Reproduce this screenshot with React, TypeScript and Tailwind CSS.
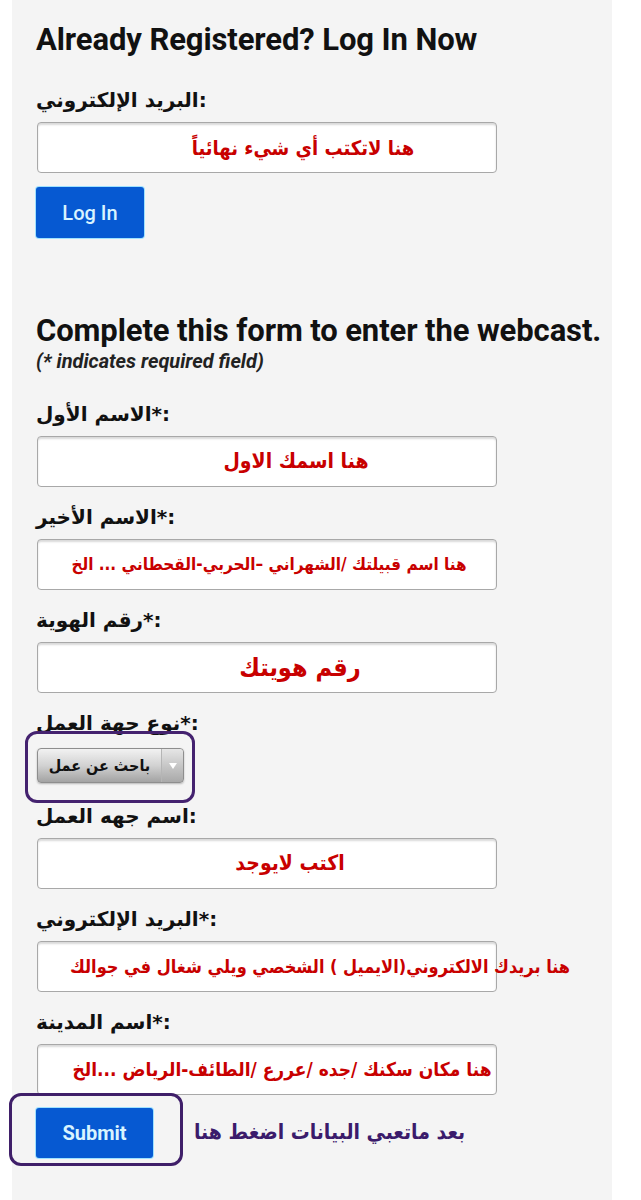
import type { ReactNode } from "react";

const ar = "font-['DejaVu_Sans',sans-serif]";
const arBold = "font-['DejaVu_Sans_Condensed','DejaVu_Sans',sans-serif]";

function Label({ children, top = "mt-[16px]" }: { children: ReactNode; top?: string }) {
  return (
    <p className={`${top} h-[28px] text-[20px] leading-[28px] text-[#111] font-semibold ${ar}`}>
      {children}
    </p>
  );
}

function Field({ hint, pad, size = "text-[21px]" }: { hint: string; pad: string; size?: string }) {
  return (
    <div
      className={`mt-[8px] ml-[1px] w-[460px] h-[51px] flex items-center justify-center ${pad} bg-white border border-[#a8a8a8] rounded-[4px] shadow-[inset_0_2px_2px_rgba(0,0,0,0.15)]`}
    >
      <span dir="rtl" className={`whitespace-nowrap ${size} font-bold text-[#c80000] ${arBold}`}>
        {hint}
      </span>
    </div>
  );
}

export default function App() {
  return (
    <div className="min-h-[1200px] bg-white">
      <div className="ml-[12px] w-[600px] min-h-[1200px] bg-[#f4f4f4] pl-[24px] pt-[24px] font-['Roboto','Liberation_Sans',sans-serif]">
        {/* Log in */}
        <h1 className="h-[32px] text-[31px] leading-[32px] font-bold text-[#111] tracking-[-0.1px] whitespace-nowrap">
          Already Registered? Log In Now
        </h1>
        <Label top="mt-[30px]">البريد الإلكتروني:</Label>
        <Field hint="هنا لاتكتب أي شيء نهائياً" pad="pl-[72px]" size="text-[20px]" />
        <button className="mt-[14px] w-[108px] h-[51px] rounded-[3px] bg-[#0659d2] ring-1 ring-[#9fe2ff] text-[20px] font-medium text-[#d8f4ff]">
          Log In
        </button>

        {/* Webcast form */}
        <h2 className="mt-[75px] h-[36px] text-[31px] leading-[36px] font-bold text-[#111] tracking-[-0.1px] whitespace-nowrap">
          Complete this form to enter the webcast.
        </h2>
        <p className="h-[24px] text-[20px] leading-[24px] font-bold italic text-[#222]">
          (* indicates required field)
        </p>

        <Label top="mt-[27px]">الاسم الأول*:</Label>
        <Field hint="هنا اسمك الاول" pad="pl-[58px]" />

        <Label>الاسم الأخير*:</Label>
        <Field hint="هنا اسم قبيلتك /الشهراني –الحربي-القحطاني ... الخ" pad="pl-[4px]" size="text-[17px]" />

        <Label>رقم الهوية*:</Label>
        <Field hint="رقم هويتك" pad="pl-[66px]" size="text-[25px]" />

        <Label>نوع جهة العمل*:</Label>
        <div className="relative mt-[11px] ml-[1px] w-[147px] h-[35px] flex rounded-[4px] border border-[#8e8e8e] bg-gradient-to-b from-[#f2f2f2] via-[#d2d2d2] to-[#a3a3a3] shadow-[0_1px_2px_rgba(0,0,0,0.25)]">
          <span className={`flex-1 flex items-center justify-center text-[16px] font-bold text-[#111] ${arBold}`}>
            باحث عن عمل
          </span>
          <span className="w-[22px] flex items-center justify-center border-l border-[#b5b5b5] bg-gradient-to-b from-[#e6e6e6] to-[#a9a9a9] rounded-r-[4px]">
            <svg width="8" height="6" viewBox="0 0 8 6">
              <path d="M0 0h8L4 6z" fill="#fff" />
            </svg>
          </span>
          <div className="absolute -left-[13px] -top-[18px] -right-[12px] -bottom-[21px] border-[3px] border-[#44226f] rounded-[12px] pointer-events-none" />
        </div>

        <Label top="mt-[19px]">اسم جهه العمل:</Label>
        <Field hint="اكتب لايوجد" pad="pl-[46px]" />

        <Label>البريد الإلكتروني*:</Label>
        <Field hint="هنا بريدك الالكتروني(الايميل ) الشخصي ويلي شغال في جوالك" pad="pl-[106px]" size="text-[18px]" />

        <Label>اسم المدينة*:</Label>
        <Field hint="هنا مكان سكنك /جده /عررع /الطائف-الرياض ...الخ" pad="pl-[30px]" size="text-[19px]" />

        <div className="mt-[13px] flex items-center gap-[41px]">
          <div className="relative">
            <button className="w-[117px] h-[50px] rounded-[3px] bg-[#0659d2] ring-1 ring-[#9fe2ff] text-[20px] font-bold text-[#d8f4ff]">
              Submit
            </button>
            <div className="absolute -left-[27px] -top-[15px] -right-[30px] -bottom-[8px] border-[3px] border-[#3f1f69] rounded-[12px] pointer-events-none" />
          </div>
          <span dir="rtl" className={`text-[21px] font-bold text-[#3b1b6b] ${arBold}`}>
            بعد ماتعبي البيانات اضغط هنا
          </span>
        </div>
      </div>
    </div>
  );
}
